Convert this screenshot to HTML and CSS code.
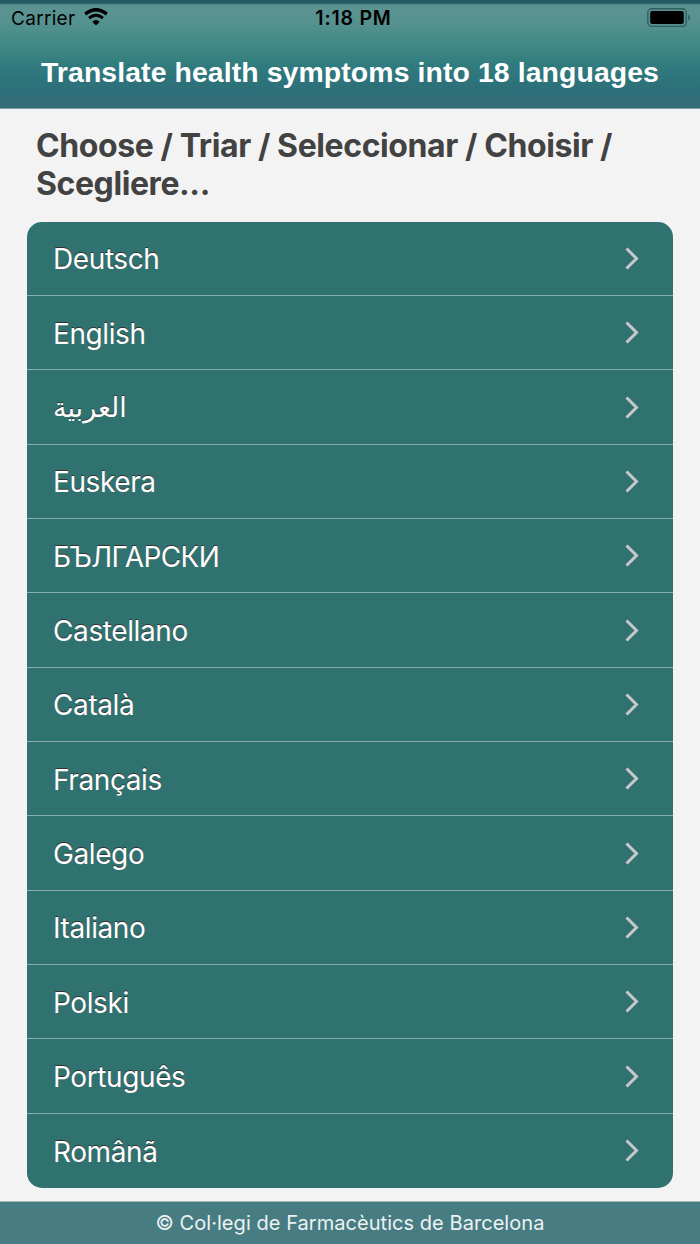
FILE: index.html
```html
<!DOCTYPE html>
<html lang="en">
<head>
    <meta charset="UTF-8">
    <meta name="viewport" content="width=device-width, initial-scale=1.0">
    <title>Translate health symptoms</title>
    <link rel="stylesheet" href="styles.css">
</head>
<body>
    <div class="header">
        <div class="status-bar">
            <div class="carrier">
                <span>Carrier</span>
                <svg class="wifi" width="24" height="18" viewBox="0 0 24 18">
                    <path d="M1.2 6.1 Q12 -2.7 22.8 6.1" fill="none" stroke="#000" stroke-width="3.4"/>
                    <path d="M5 10.2 Q12 4.3 19 10.2" fill="none" stroke="#000" stroke-width="3"/>
                    <path d="M8.2 13.8 Q12 10.3 15.8 13.8 L12 17.4Z" fill="#000"/>
                </svg>
            </div>
            <div class="time">1:18 PM</div>
            <svg class="battery" width="44" height="20" viewBox="0 0 44 20">
                <rect x="0.8" y="0.8" width="38.5" height="17.6" rx="4" fill="none" stroke="#315f5f" stroke-width="1.4"/>
                <rect x="3.2" y="3.1" width="33.6" height="12.8" rx="2" fill="#000"/>
                <path d="M41.2 6.4 C43.7 7.5 43.7 11.5 41.2 12.6Z" fill="#315f5f"/>
            </svg>
        </div>
        <h1>Translate health symptoms into 18 languages</h1>
    </div>

    <div class="content">
        <h2>Choose / Triar / Seleccionar / Choisir / Scegliere...</h2>

        <ul class="languages">
            <li><span>Deutsch</span><svg class="arrow" viewBox="0 0 14 23"><path d="M1.5 1.5 L11.5 11.5 L1.5 21.5"/></svg></li>
            <li><span>English</span><svg class="arrow" viewBox="0 0 14 23"><path d="M1.5 1.5 L11.5 11.5 L1.5 21.5"/></svg></li>
            <li><span class="arabic" lang="ar">العربية</span><svg class="arrow" viewBox="0 0 14 23"><path d="M1.5 1.5 L11.5 11.5 L1.5 21.5"/></svg></li>
            <li><span>Euskera</span><svg class="arrow" viewBox="0 0 14 23"><path d="M1.5 1.5 L11.5 11.5 L1.5 21.5"/></svg></li>
            <li><span class="cyrillic">БЪЛГАРСКИ</span><svg class="arrow" viewBox="0 0 14 23"><path d="M1.5 1.5 L11.5 11.5 L1.5 21.5"/></svg></li>
            <li><span>Castellano</span><svg class="arrow" viewBox="0 0 14 23"><path d="M1.5 1.5 L11.5 11.5 L1.5 21.5"/></svg></li>
            <li><span>Català</span><svg class="arrow" viewBox="0 0 14 23"><path d="M1.5 1.5 L11.5 11.5 L1.5 21.5"/></svg></li>
            <li><span>Français</span><svg class="arrow" viewBox="0 0 14 23"><path d="M1.5 1.5 L11.5 11.5 L1.5 21.5"/></svg></li>
            <li><span>Galego</span><svg class="arrow" viewBox="0 0 14 23"><path d="M1.5 1.5 L11.5 11.5 L1.5 21.5"/></svg></li>
            <li><span>Italiano</span><svg class="arrow" viewBox="0 0 14 23"><path d="M1.5 1.5 L11.5 11.5 L1.5 21.5"/></svg></li>
            <li><span>Polski</span><svg class="arrow" viewBox="0 0 14 23"><path d="M1.5 1.5 L11.5 11.5 L1.5 21.5"/></svg></li>
            <li><span>Português</span><svg class="arrow" viewBox="0 0 14 23"><path d="M1.5 1.5 L11.5 11.5 L1.5 21.5"/></svg></li>
            <li><span>Românã</span><svg class="arrow" viewBox="0 0 14 23"><path d="M1.5 1.5 L11.5 11.5 L1.5 21.5"/></svg></li>
        </ul>
    </div>

    <div class="footer">© Col·legi de Farmacèutics de Barcelona</div>
</body>
</html>
```

FILE: styles.css
```css
* {
    box-sizing: border-box;
}

body {
    height: 1244px;
    margin: 0;
    display: flex;
    flex-direction: column;
    font-family: Inter, "Liberation Sans", sans-serif;
    background: #f3f3f3;
    overflow: hidden;
}

.header {
    height: 109px;
    flex: none;
    background: linear-gradient(#255a62 0, #255a62 3px, #5b9391 5px, #579290 20px, #468b88 40px, #317c7e 64px, #2d717a 85px, #346b77 108px);
    border-bottom: 1px solid #819da3;
}

.status-bar {
    height: 36px;
    padding: 0 9px 0 11px;
    display: grid;
    grid-template-columns: 1fr auto 1fr;
    align-items: center;
    font-size: 19px;
    color: #000;
}

.carrier {
    display: flex;
    align-items: center;
    gap: 9px;
    letter-spacing: 0.3px;
}

.wifi {
    margin-top: -2px;
}

.time {
    font-size: 19.5px;
    font-weight: 600;
    letter-spacing: 0.8px;
    padding-left: 5px;
}

.battery {
    justify-self: end;
    margin-top: -1px;
}

.header h1 {
    margin: 0;
    font-family: "Liberation Sans", sans-serif;
    font-size: 28.4px;
    line-height: 72px;
    font-weight: bold;
    letter-spacing: 0.1px;
    text-align: center;
    white-space: nowrap;
    color: #fff;
}

.content {
    flex: 1;
    padding: 18px 27px 0;
}

.content h2 {
    margin: 0 0 18px;
    padding-left: 9px;
    font-size: 32px;
    line-height: 38.4px;
    font-weight: 700;
    letter-spacing: -0.41px;
    color: #424242;
}

.languages {
    margin: 0;
    padding: 0;
    list-style: none;
    background: #30726f;
    border-radius: 15px;
    overflow: hidden;
}

.languages li {
    height: 74.34px;
    padding: 0 34px 0 26px;
    display: flex;
    align-items: center;
    justify-content: space-between;
    border-bottom: 1px solid #8aacaa;
    font-size: 28px;
    letter-spacing: -0.4px;
    color: #fff;
    text-shadow: 0 -1.5px 0.5px #333;
}

.languages li span {
    padding-top: 1.5px;
}

.languages li:last-child {
    border-bottom: none;
}

.languages .arabic {
    padding-top: 0;
    font-family: "DejaVu Sans", sans-serif;
    font-size: 27px;
    letter-spacing: 0;
}

.languages .cyrillic {
    letter-spacing: -0.6px;
}

.arrow {
    width: 14px;
    height: 23px;
    fill: none;
    stroke: #c7c7cc;
    stroke-width: 3;
}

.footer {
    height: 43px;
    flex: none;
    border-top: 1px solid #a3b9b4;
    background: #477d82;
    font-size: 20px;
    line-height: 42px;
    letter-spacing: 0.05px;
    text-align: center;
    color: #edf2f2;
}
```
